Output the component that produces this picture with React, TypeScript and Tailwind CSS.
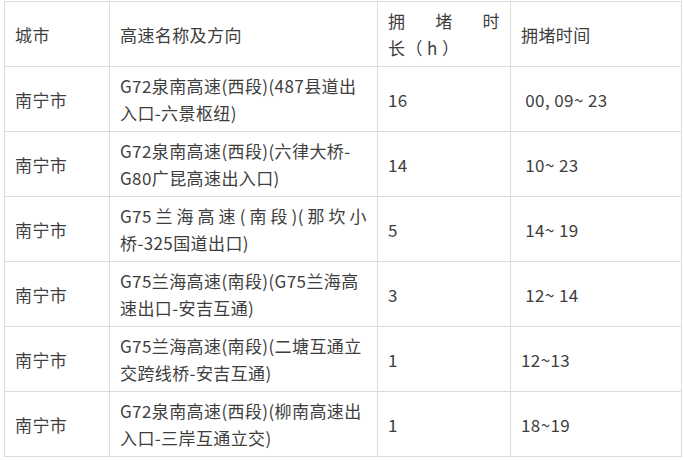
import React from 'react';

const rows = [
  { city: '南宁市', road: 'G72泉南高速(西段)(487县道出入口-六景枢纽)', hours: '16', time: '\u00a000, 09~ 23' },
  { city: '南宁市', road: 'G72泉南高速(西段)(六律大桥-G80广昆高速出入口)', hours: '14', time: '\u00a010~ 23' },
  { city: '南宁市', road: 'G75兰海高速(南段)(那坎小桥-325国道出口)', hours: '5', time: '\u00a014~ 19', justify: true },
  { city: '南宁市', road: 'G75兰海高速(南段)(G75兰海高速出口-安吉互通)', hours: '3', time: '\u00a012~ 14' },
  { city: '南宁市', road: 'G75兰海高速(南段)(二塘互通立交跨线桥-安吉互通)', hours: '1', time: '12~13' },
  { city: '南宁市', road: 'G72泉南高速(西段)(柳南高速出入口-三岸互通立交)', hours: '1', time: '18~19' },
];

const cell = 'border border-[#dcdcdc] px-[10px] py-[5px] align-middle';

export default function App() {
  return (
    <div className="w-[684px] h-[460px] bg-white pt-[1px] pl-[4px]">
      <table
        className="w-[677px] border-collapse table-fixed text-[17px] leading-[27px] text-[#3e3e3e] tracking-[0.4px]"
        style={{ fontFamily: '"Noto Sans CJK SC", "Noto Sans", sans-serif' }}
      >
        <colgroup>
          <col className="w-[105px]" />
          <col className="w-[268px]" />
          <col className="w-[133px]" />
          <col className="w-[171px]" />
        </colgroup>
        <thead>
          <tr className="h-[65px]">
            <td className={cell}>城市</td>
            <td className={cell}>高速名称及方向</td>
            <td className={cell}>
              <div className="flex justify-between">
                <span>拥</span>
                <span>堵</span>
                <span>时</span>
              </div>
              <div className="whitespace-pre">长（ h ）</div>
            </td>
            <td className={cell}>拥堵时间</td>
          </tr>
        </thead>
        <tbody>
          {rows.map((r, i) => (
            <tr key={i} className="h-[65px]">
              <td className={cell}>{r.city}</td>
              <td className={`${cell} ${r.justify ? 'text-justify [text-justify:inter-character]' : ''}`}>{r.road}</td>
              <td className={cell}>{r.hours}</td>
              <td className={`${cell} whitespace-pre`}>{r.time}</td>
            </tr>
          ))}
        </tbody>
      </table>
    </div>
  );
}
